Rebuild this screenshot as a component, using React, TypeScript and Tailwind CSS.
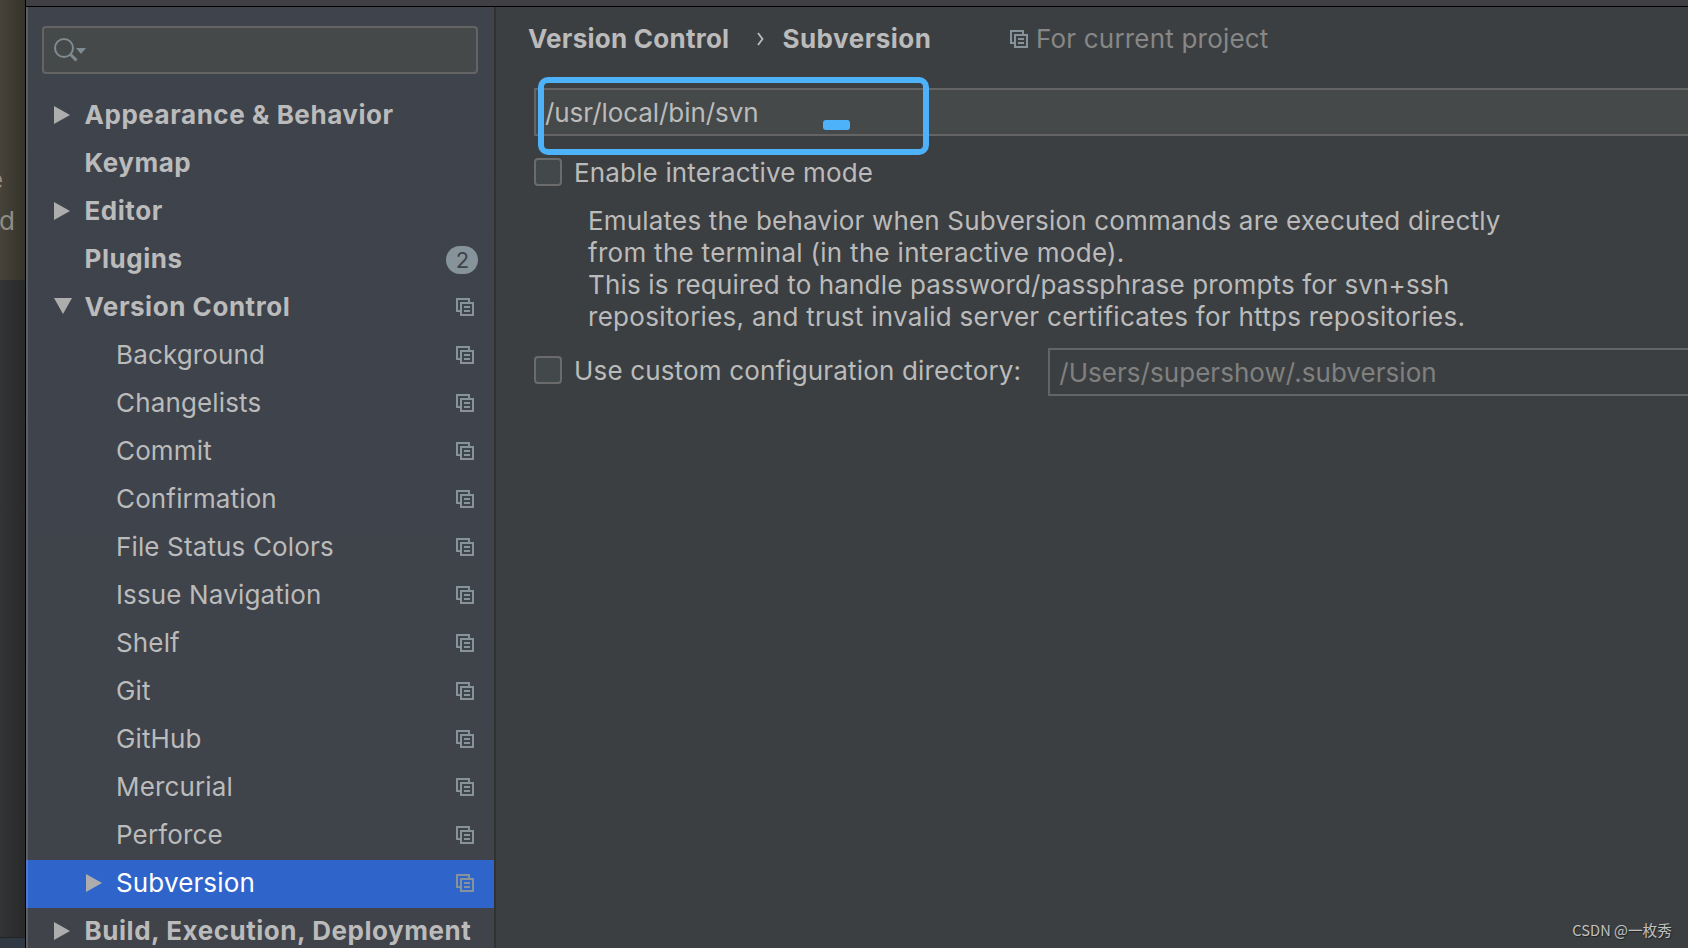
import clsx from "clsx";

interface TreeItem {
  label: string;
  level: 0 | 1;
  arrow?: "right" | "down";
  badge?: string;
  project?: boolean;
  selected?: boolean;
}

const items: TreeItem[] = [
  { label: "Appearance & Behavior", level: 0, arrow: "right" },
  { label: "Keymap", level: 0 },
  { label: "Editor", level: 0, arrow: "right" },
  { label: "Plugins", level: 0, badge: "2" },
  { label: "Version Control", level: 0, arrow: "down", project: true },
  { label: "Background", level: 1, project: true },
  { label: "Changelists", level: 1, project: true },
  { label: "Commit", level: 1, project: true },
  { label: "Confirmation", level: 1, project: true },
  { label: "File Status Colors", level: 1, project: true },
  { label: "Issue Navigation", level: 1, project: true },
  { label: "Shelf", level: 1, project: true },
  { label: "Git", level: 1, project: true },
  { label: "GitHub", level: 1, project: true },
  { label: "Mercurial", level: 1, project: true },
  { label: "Perforce", level: 1, project: true },
  { label: "Subversion", level: 1, arrow: "right", project: true, selected: true },
  { label: "Build, Execution, Deployment", level: 0, arrow: "right" },
];

function ProjectIcon({ className }: { className?: string }) {
  return (
    <svg
      width="18"
      height="18"
      viewBox="0 0 18 18"
      fill="none"
      stroke="currentColor"
      strokeWidth="2"
      className={clsx("shrink-0", className)}
    >
      <path d="M4 13H1V1H13V4" />
      <rect x="5" y="5" width="12" height="12" />
      <path d="M8 9H14M8 13H14" />
    </svg>
  );
}

function Arrow({ direction }: { direction: "right" | "down" }) {
  if (direction === "down") {
    return (
      <svg width="18" height="16" viewBox="0 0 18 16" className="mb-0.5 fill-[#adadad]">
        <path d="M0 0H18L9 16Z" />
      </svg>
    );
  }
  return (
    <svg width="16" height="18" viewBox="0 0 16 18" className="fill-[#adadad]">
      <path d="M0 0L16 9L0 18Z" />
    </svg>
  );
}

function TreeRow({ item }: { item: TreeItem }) {
  return (
    <div
      className={clsx(
        "flex h-12 shrink-0 items-center pr-4",
        item.level === 0 ? "pl-7" : "pl-[60px]",
        item.selected && "bg-[#2f65ca]"
      )}
    >
      <div className="flex w-[30px] shrink-0 items-center pb-0.5">
        {item.arrow && <Arrow direction={item.arrow} />}
      </div>
      <span
        className={clsx(
          "flex-1 whitespace-nowrap pb-0.5",
          item.level === 0 ? "pl-[0.5px] font-bold tracking-[0.54px]" : "tracking-[0.14px]",
          item.selected ? "text-white" : "text-[#bbbbbb]"
        )}
      >
        {item.label}
      </span>
      {item.badge && (
        <span className="flex h-7 w-8 items-center justify-center rounded-full bg-[#87939a] pl-px text-[22px] text-[#3d434b]">
          {item.badge}
        </span>
      )}
      {item.project && <ProjectIcon className="mr-1 mb-0.5 text-[#87939a]" />}
    </div>
  );
}

function Sidebar() {
  return (
    <aside className="relative flex w-[470px] shrink-0 flex-col border-r-2 border-[#323232] bg-linear-to-b from-[#3e434c] to-[#40434a]">
      <div className="mx-4 mt-[19px] mb-[18px] flex h-12 shrink-0 items-center rounded border-2 border-[#646464] bg-[#45494a] pl-2.5">
        <svg width="34" height="26" viewBox="0 0 34 26" fill="none" className="text-[#7f8b91]">
          <circle cx="10" cy="11" r="9" stroke="currentColor" strokeWidth="2" />
          <path d="M16.5 17.5L22.5 23.5" stroke="currentColor" strokeWidth="3" />
          <path d="M22 11H32L27 17Z" fill="currentColor" />
        </svg>
      </div>
      {items.map((item) => (
        <TreeRow key={item.label} item={item} />
      ))}
      {/* light window edge */}
      <div className="absolute inset-y-0 left-0 w-0.5 bg-white/15" />
    </aside>
  );
}

function Checkbox() {
  return <span className="size-7 shrink-0 rounded border-2 border-[#6b6b6b] bg-[#43494a]" />;
}

function Settings() {
  return (
    <main className="relative min-w-0 flex-1 overflow-hidden bg-[#3c3f41] pl-[38px] whitespace-nowrap text-[#bbbbbb]">
      <div className="-ml-1.5 flex h-[63px] items-center">
        <span className="font-bold tracking-[0.25px]">Version Control</span>
        <svg width="7" height="14" viewBox="0 0 7 14" fill="none" className="ml-[28px] stroke-[#bbbbbb]">
          <path d="M1 1L5.5 7L1 13" strokeWidth="1.8" />
        </svg>
        <span className="ml-[18px] font-bold tracking-[0.5px]">Subversion</span>
        <ProjectIcon className="ml-[79px] text-[#87939a]" />
        <span className="ml-[7.5px] tracking-[0.2px] text-[#878787]">For current project</span>
      </div>

      <div className="mt-[18px] flex h-12 items-center border-2 border-r-0 border-[#646464] bg-[#45494a] pl-[9px]">
        <span className="pt-px tracking-[-0.06px]">/usr/local/bin/svn</span>
      </div>

      <div className="mt-[22px] flex h-7 items-center gap-3">
        <Checkbox />
        <span className="pt-px tracking-[0.16px]">Enable interactive mode</span>
      </div>

      <p className="mt-[19px] pl-[54px] leading-8 tracking-[0.19px]">
        Emulates the behavior when Subversion commands are executed directly
        <br />
        <span className="tracking-[0.29px]">from the terminal (in the interactive mode).</span>
        <br />
        <span className="tracking-[0.15px]">
          This is required to handle password/passphrase prompts for svn+ssh
        </span>
        <br />
        <span className="tracking-[0.28px]">
          repositories, and trust invalid server certificates for https repositories.
        </span>
      </p>

      <div className="mt-[15px] flex h-12 items-center">
        <div className="mb-1 flex items-center gap-3">
          <Checkbox />
          <span className="pt-px tracking-[0.16px]">Use custom configuration directory:</span>
        </div>
        <div className="ml-[27px] flex h-12 flex-1 items-center border-2 border-r-0 border-[#646464] pl-[9px] text-[#808080]">
          <span className="pt-px tracking-[0.04px]">/Users/supershow/.subversion</span>
        </div>
      </div>

      {/* highlight drawn over the path field */}
      <div className="absolute top-[70px] left-[42px] h-[78px] w-[391px] rounded-[10px] border-[6px] border-[#4eb2fa]" />
      <div className="absolute top-[113px] left-[327px] h-2.5 w-[27px] rounded-[3px] bg-[#4eb2fa]" />
    </main>
  );
}

export default function App() {
  return (
    <div className="flex h-screen overflow-hidden bg-[#2b2b2b] font-['Inter',sans-serif] text-[26px] leading-8">
      {/* strip of the window behind the dialog */}
      <div className="flex w-[25px] shrink-0 flex-col overflow-hidden text-[#8f8d86]">
        <div className="h-[280px] shrink-0 bg-linear-to-r from-[#47433a] to-[#35322a] pt-[164px]">
          <div className="-ml-3 h-[41px]">e</div>
          <div className="-ml-px">d</div>
        </div>
        <div className="flex-1 bg-linear-to-r from-[#323435] to-[#29292a]" />
        <div className="h-[11px] border-t border-[#232425] bg-[#303844]" />
      </div>

      <div className="flex min-w-0 flex-1 flex-col border-l border-black">
        <div className="h-[7px] shrink-0 border-b border-black bg-[#403f43]" />
        <div className="flex min-h-0 flex-1">
          <Sidebar />
          <Settings />
        </div>
      </div>

      <span className="absolute right-[16px] bottom-[7px] font-['Noto_Sans_CJK_SC',sans-serif] text-[14.7px] leading-[22px] text-[#c0c0c0] [text-shadow:1px_1px_1px_#222]">
        CSDN @一枚秀
      </span>
    </div>
  );
}
